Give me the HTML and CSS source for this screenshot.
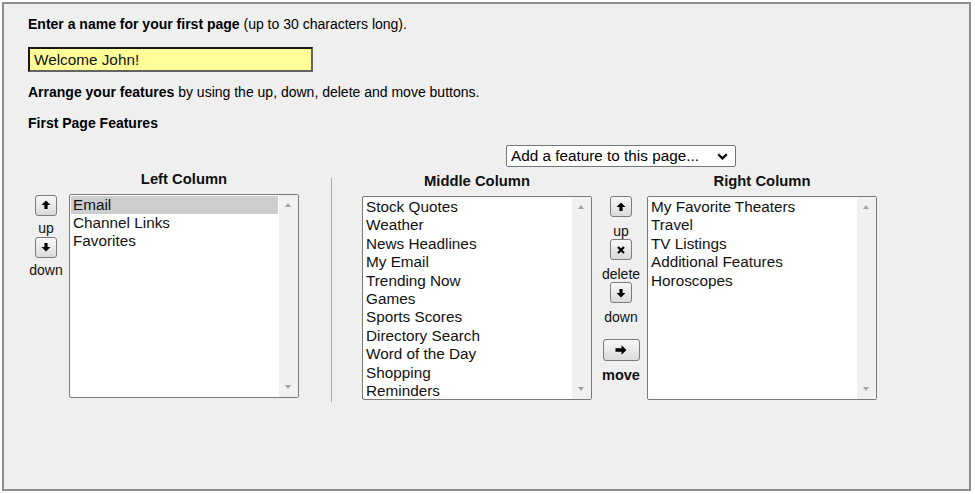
FILE: index.html
```html
<!DOCTYPE html>
<html>
<head>
<meta charset="utf-8">
<title>First Page Features</title>
<link rel="stylesheet" href="styles.css">
</head>
<body>
<div class="frame">
  <p class="line line-first"><b>Enter a name for your first page</b> (up to 30 characters long).</p>
  <div class="name-input">Welcome John!</div>
  <p class="line line-arrange"><b>Arrange your features</b> by using the up, down, delete and move buttons.</p>
  <p class="line line-title"><b>First Page Features</b></p>

  <div class="columns">
    <div class="left-group">
      <div class="col-heading left-heading">Left Column</div>
      <div class="btn-stack left-stack">
        <div class="icon-btn"><svg width="10" height="10" viewBox="0 0 10 10"><polygon points="5,0.5 9.5,5 6.6,5 6.6,9 3.4,9 3.4,5 0.5,5" fill="#000"/></svg></div>
        <div class="btn-label">up</div>
        <div class="icon-btn"><svg width="10" height="10" viewBox="0 0 10 10"><polygon points="5,9.5 9.5,5 6.6,5 6.6,1 3.4,1 3.4,5 0.5,5" fill="#000"/></svg></div>
        <div class="btn-label">down</div>
      </div>
      <div class="listbox">
        <div class="items">
          <div class="item selected">Email</div>
          <div class="item">Channel Links</div>
          <div class="item">Favorites</div>
        </div>
        <div class="scrollbar"><span class="arrow arrow-up"></span><span class="arrow arrow-down"></span></div>
      </div>
    </div>

    <div class="divider"></div>

    <div class="right-group">
      <div class="select">
        <span>Add a feature to this page...</span>
        <svg class="chevron" width="11" height="7" viewBox="0 0 11 7"><path d="M1.2 1.2 L5.5 5.4 L9.8 1.2" fill="none" stroke="#000" stroke-width="2.2"/></svg>
      </div>
      <div class="right-row">
        <div class="list-col">
          <div class="col-heading">Middle Column</div>
          <div class="listbox">
            <div class="items">
              <div class="item">Stock Quotes</div>
              <div class="item">Weather</div>
              <div class="item">News Headlines</div>
              <div class="item">My Email</div>
              <div class="item">Trending Now</div>
              <div class="item">Games</div>
              <div class="item">Sports Scores</div>
              <div class="item">Directory Search</div>
              <div class="item">Word of the Day</div>
              <div class="item">Shopping</div>
              <div class="item">Reminders</div>
            </div>
            <div class="scrollbar"><span class="arrow arrow-up"></span><span class="arrow arrow-down"></span></div>
          </div>
        </div>

        <div class="btn-stack mid-stack">
          <div class="icon-btn"><svg width="10" height="10" viewBox="0 0 10 10"><polygon points="5,0.5 9.5,5 6.6,5 6.6,9 3.4,9 3.4,5 0.5,5" fill="#000"/></svg></div>
          <div class="btn-label">up</div>
          <div class="icon-btn"><svg width="10" height="10" viewBox="0 0 10 10"><path d="M2 2 L8 8 M8 2 L2 8" stroke="#000" stroke-width="2.2"/></svg></div>
          <div class="btn-label">delete</div>
          <div class="icon-btn"><svg width="10" height="10" viewBox="0 0 10 10"><polygon points="5,9.5 9.5,5 6.6,5 6.6,1 3.4,1 3.4,5 0.5,5" fill="#000"/></svg></div>
          <div class="btn-label">down</div>
          <div class="icon-btn move-btn"><svg width="12" height="10" viewBox="0 0 12 10"><polygon points="11.5,5 6.5,0.3 6.5,3.2 0.5,3.2 0.5,6.8 6.5,6.8 6.5,9.7" fill="#000"/></svg></div>
          <div class="btn-label move-label">move</div>
        </div>

        <div class="list-col">
          <div class="col-heading">Right Column</div>
          <div class="listbox">
            <div class="items">
              <div class="item">My Favorite Theaters</div>
              <div class="item">Travel</div>
              <div class="item">TV Listings</div>
              <div class="item">Additional Features</div>
              <div class="item">Horoscopes</div>
            </div>
            <div class="scrollbar"><span class="arrow arrow-up"></span><span class="arrow arrow-down"></span></div>
          </div>
        </div>
      </div>
    </div>
  </div>
</div>
</body>
</html>
```

FILE: styles.css
```css
* { box-sizing: border-box; }

html, body {
  margin: 0;
  padding: 0;
  background: #ffffff;
}

body {
  font-family: "Liberation Sans", Arial, sans-serif;
  color: #000;
}

.frame {
  width: 969px;
  height: 489px;
  margin: 2px 0 0 2px;
  border: 2px solid #8e8e8e;
  background: #efefef;
  padding: 12px 24px 0 24px;
}

.line {
  margin: 0;
  font-size: 14px;
  line-height: 16px;
}

.line b { font-weight: bold; }

.name-input {
  margin-top: 15px;
  width: 285px;
  height: 25px;
  background: #ffff99;
  border: 2px solid;
  border-color: #161616 #636363 #636363 #161616;
  font-size: 15.3px;
  line-height: 21px;
  padding-left: 4px;
  color: #111;
}

.line-arrange { margin-top: 12px; }
.line-title { margin-top: 15px; }

.columns {
  display: flex;
  align-items: flex-start;
  margin-top: 14px;
}

.left-group {
  display: grid;
  grid-template-columns: 34px 230px;
  column-gap: 6px;
  row-gap: 6px;
  margin-top: 25.6px;
  margin-left: 1px;
}

.left-heading { grid-column: 2; grid-row: 1; }
.left-group .btn-stack { grid-column: 1; grid-row: 2; }
.left-group .listbox { grid-column: 2; grid-row: 2; }

.col-heading {
  font-size: 14.8px;
  font-weight: bold;
  line-height: 17px;
  text-align: center;
  color: #111;
}

.divider {
  width: 1px;
  height: 224px;
  background: #a8a8a8;
  margin-top: 32.6px;
  margin-left: 32px;
}

.right-group {
  display: flex;
  flex-direction: column;
  margin-left: 30px;
}

.select {
  width: 230px;
  height: 22px;
  margin-left: 144px;
  border: 1px solid #767676;
  border-radius: 2px;
  background: #fff;
  display: flex;
  align-items: center;
  justify-content: space-between;
  padding: 0 7px 0 4px;
  font-size: 15.3px;
  line-height: 20px;
}

.chevron { display: block; }

.right-row {
  display: flex;
  align-items: flex-start;
  margin-top: 6px;
}

.list-col {
  display: flex;
  flex-direction: column;
  row-gap: 6px;
  width: 230px;
}

.listbox {
  width: 230px;
  height: 204px;
  border: 1px solid #7a7a7a;
  border-radius: 2px;
  background: #fff;
  display: flex;
  overflow: hidden;
}

.items {
  flex: 1;
  padding: 1px;
  overflow: hidden;
}

.item {
  font-size: 15.3px;
  line-height: 18.4px;
  padding: 0 2px;
  white-space: nowrap;
  color: #111;
}

.item.selected { background: #cdcdcd; }

.scrollbar {
  width: 19px;
  background: #f0f0f0;
  position: relative;
}

.arrow {
  position: absolute;
  left: 6px;
  width: 0;
  height: 0;
  border-left: 3.5px solid transparent;
  border-right: 3.5px solid transparent;
}

.arrow-up {
  top: 8px;
  border-bottom: 4px solid #a3a3a3;
}

.arrow-down {
  bottom: 8px;
  border-top: 4px solid #a3a3a3;
}

.btn-stack {
  display: flex;
  flex-direction: column;
  align-items: center;
}

.left-stack { margin-top: 1px; }

.left-stack .btn-label {
  height: 21px;
  line-height: 16px;
  padding-top: 4px;
}

.mid-stack {
  width: 40px;
  margin: 23px 6px 0 9px;
}

.mid-stack .btn-label {
  height: 22px;
  line-height: 16px;
  padding-top: 5.5px;
}

.icon-btn {
  flex: none;
  width: 22px;
  height: 21px;
  border: 1px solid #7c7c7c;
  border-radius: 3px;
  background: linear-gradient(#f8f8f8, #dadada);
  display: flex;
  align-items: center;
  justify-content: center;
}

.icon-btn svg { display: block; }

.move-btn {
  width: 37px;
  height: 22px;
  margin-top: 14px;
}

.btn-label {
  font-size: 14px;
  color: #111;
}

.mid-stack .move-label {
  font-weight: bold;
  font-size: 14.5px;
  height: 23px;
  margin-top: 2px;
  padding-top: 4px;
}
```
